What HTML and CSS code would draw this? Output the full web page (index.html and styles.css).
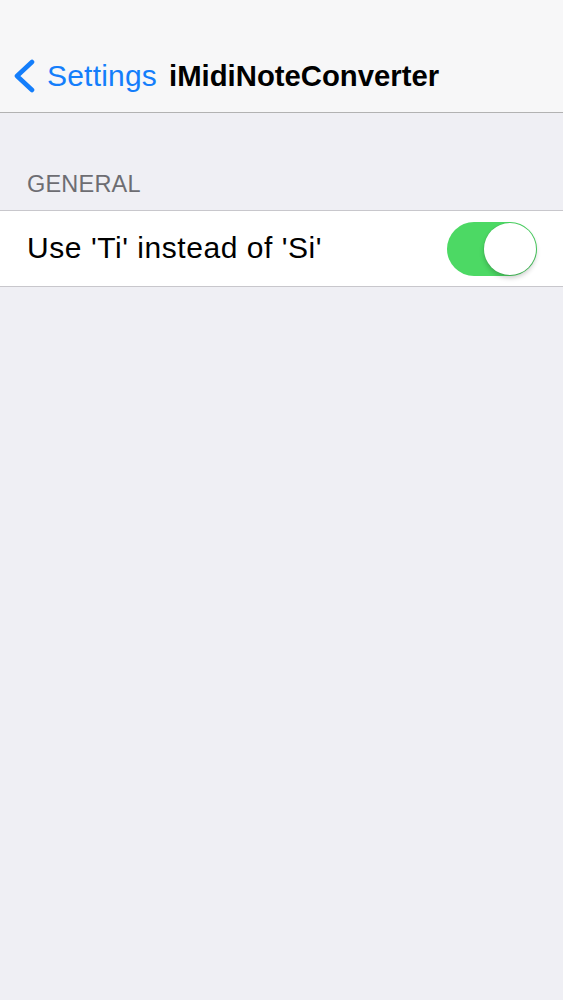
FILE: index.html
```html
<!DOCTYPE html>
<html>
<head>
<meta charset="utf-8">
<link rel="stylesheet" href="styles.css">
</head>
<body>
<header class="nav">
  <div class="nav-bar">
    <a class="back">
      <svg class="chev" width="26" height="34" viewBox="0 0 26 34"><path d="M21 3 L6 17 L21 31" fill="none" stroke="#147efb" stroke-width="4.6" stroke-linecap="round" stroke-linejoin="round"/></svg>
      <span class="back-label">Settings</span>
    </a>
    <span class="title">iMidiNoteConverter</span>
  </div>
</header>
<main>
  <div class="section-header">GENERAL</div>
  <div class="group">
    <div class="cell">
      <span class="cell-label">Use 'Ti' instead of 'Si'</span>
      <div class="switch on"><div class="knob"></div></div>
    </div>
  </div>
</main>
</body>
</html>
```
FILE: styles.css
```css
html, body {
  margin: 0;
  padding: 0;
  background: #efeff4;
  font-family: "Liberation Sans", Arial, sans-serif;
}
.nav {
  background: #f7f7f8;
  padding-top: 40px;
  border-bottom: 1px solid #b2b2b2;
}
.nav-bar {
  height: 72px;
  display: flex;
  align-items: center;
}
.back {
  display: flex;
  align-items: center;
  margin-left: 11px;
  color: #147efb;
}
.chev {
  display: block;
}
.back-label {
  font-size: 30px;
  margin-left: 10px;
  line-height: 36px;
  letter-spacing: 0.2px;
}
.title {
  font-size: 29.3px;
  font-weight: bold;
  color: #000;
  margin-left: 12px;
  line-height: 36px;
}
.section-header {
  padding: 57px 0 12px 27px;
  font-size: 23.5px;
  line-height: 28px;
  color: #6d6d72;
  letter-spacing: 0.2px;
}
.group {
  background: #fff;
  border-top: 1px solid #c8c7cc;
  border-bottom: 1px solid #c8c7cc;
}
.cell {
  height: 75px;
  display: flex;
  align-items: center;
  justify-content: space-between;
  padding: 0 26px 0 27px;
}
.cell-label {
  font-size: 30px;
  line-height: 36px;
  color: #000;
  letter-spacing: 0.55px;
  position: relative;
  top: -1px;
}
.switch {
  width: 90px;
  height: 54px;
  border-radius: 27px;
  background: #4cd964;
  position: relative;
  box-sizing: border-box;
}
.knob {
  position: absolute;
  right: 1px;
  top: 1px;
  width: 52px;
  height: 52px;
  border-radius: 50%;
  background: #fff;
  box-shadow: 0 3px 5px rgba(0,0,0,0.2), 0 0 0 0.5px rgba(0,0,0,0.08);
}
```
